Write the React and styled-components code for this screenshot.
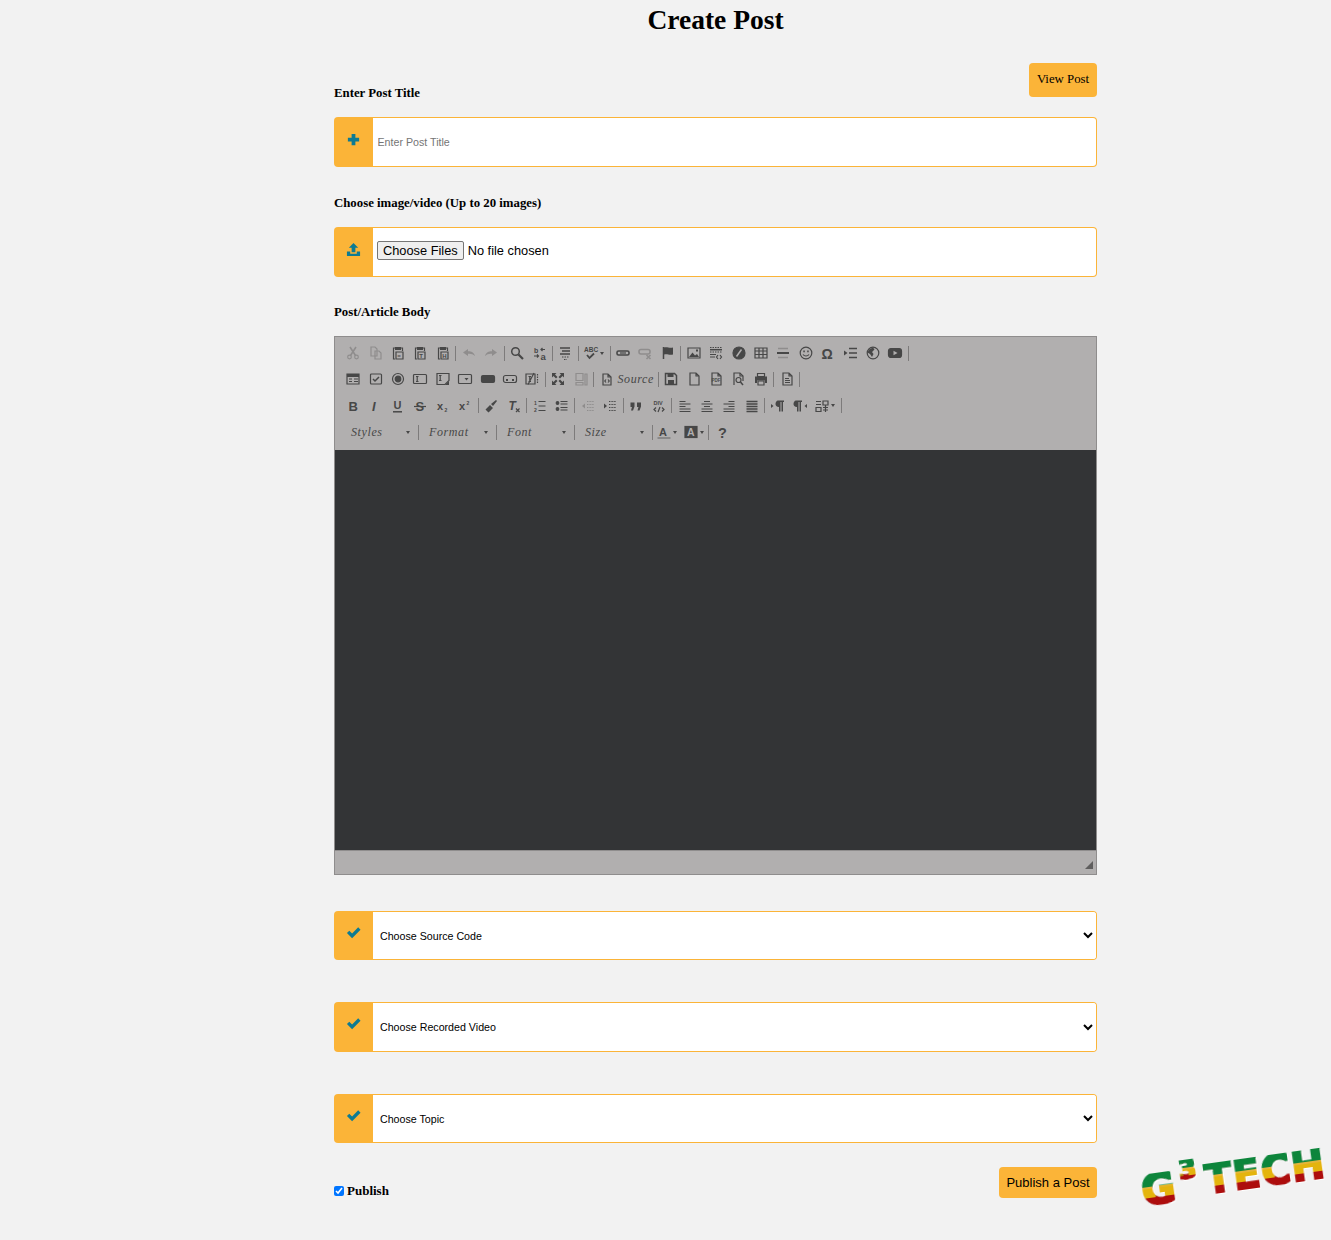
import React from "react";
import styled, { createGlobalStyle } from "styled-components";

const Global = createGlobalStyle`
  html, body { margin: 0; padding: 0; background: #f2f2f2; }
  body { font-family: "Liberation Serif", serif; color: #000; min-height: 1240px; }
`;

const Page = styled.main`
  width: 763px;
  margin-left: 334px;
  display: flex;
  flex-direction: column;
`;
const Title = styled.h1`
  margin: 0;
  height: 40px;
  line-height: 40px;
  text-align: center;
  font-size: 27.5px;
  font-weight: 700;
`;
const TitleRow = styled.div`
  display: flex;
  justify-content: space-between;
  align-items: flex-end;
  margin-top: 23px;
  height: 34px;
`;
const Label = styled.label`
  display: block;
  font-size: 12.8px;
  font-weight: 700;
  line-height: 15px;
`;
const TitleLabel = styled(Label)`
  margin-bottom: -4px;
`;
const SectionLabel = styled(Label)`
  margin-top: 28px;
  padding-top: ${(p) => p.$pt || 0}px;
`;
const ButtonBase = styled.button`
  background: #fbb438;
  border: 0;
  border-radius: 4px;
  color: #000;
  padding: 0;
`;
const ViewButton = styled(ButtonBase)`
  width: 68px;
  height: 34px;
  padding-bottom: 2px;
  font-family: "Liberation Serif", serif;
  font-size: 12.8px;
`;
const PublishButton = styled(ButtonBase)`
  width: 98px;
  height: 31px;
  font-family: "Liberation Sans", sans-serif;
  font-size: 13px;
`;
const Group = styled.div`
  display: flex;
  height: ${(p) => p.$h || 50}px;
  margin-top: ${(p) => p.$top || 0}px;
  border-radius: 4px;
`;
const GroupIcon = styled.div`
  flex: 0 0 39px;
  display: flex;
  justify-content: center;
  padding: ${(p) => p.$pt || 14}px 1px 0 0;
  box-sizing: border-box;
  background: #fbb438;
  border-radius: 4px 0 0 4px;
  color: #0e7b92;
`;
const GroupBody = styled.div`
  flex: 1;
  min-width: 0;
  display: flex;
  align-items: center;
  background: #fff;
  border: 1px solid #fbb438;
  border-left: 0;
  border-radius: 0 4px 4px 0;
  overflow: hidden;
`;
const TextInput = styled.input`
  flex: 1;
  border: 0;
  outline: 0;
  background: transparent;
  padding: 0 4.500px;
  font-family: "Liberation Sans", sans-serif;
  font-size: 10.67px;
  &::placeholder { color: #757575; }
`;
const FileInput = styled.input`
  margin: 0 0 3px 4px;
  font-family: "Liberation Sans", sans-serif;
  font-size: 12.8px;
  color: #000;
  &::file-selector-button {
    padding: 1px 5px;
    margin-right: 4px;
    border: 1px solid #767676;
    border-radius: 2px;
    background: #efefef;
  }
`;
const Select = styled.select`
  flex: 1;
  height: 100%;
  border: 0;
  outline: 0;
  background: #fff;
  padding-left: 3px;
  font-family: "Liberation Sans", sans-serif;
  font-size: 10.67px;
  color: #000;
`;

/* editor */
const Editor = styled.div`
  margin-top: 16px;
  border: 1px solid #8f8d8d;
  background: #b1afaf;
  color: #474747;
`;
const Toolbar = styled.div`
  height: 113px;
  box-sizing: border-box;
  padding: 3px 0 0 7px;
`;
const ToolRow = styled.div`
  display: flex;
  align-items: center;
  height: 26.3px;
`;
const Tool = styled.span`
  flex: 0 0 ${(p) => p.$w || 22.4}px;
  display: flex;
  align-items: center;
  justify-content: center;
  gap: 2px;
  color: ${(p) => (p.$off ? "#8f8d8d" : "#474747")};
`;
const SourceTool = styled.span`
  flex: 0 0 61px;
  display: flex;
  align-items: center;
  gap: 3px;
  padding-left: 5px;
  box-sizing: border-box;
  color: #474747;
`;
const Sep = styled.span`
  flex: 0 0 1px;
  height: 15px;
  margin: 0 1.3px;
  background: #7d7b7b;
`;
const Combo = styled.span`
  flex: 0 0 74.4px;
  display: flex;
  align-items: center;
  padding: 0 6px 0 9px;
  box-sizing: border-box;
  font-family: "Liberation Serif", serif;
  font-style: italic;
  font-size: 12px;
  letter-spacing: 0.6px;
  color: #474747;
`;
const SourceLabel = styled.span`
  font-family: "Liberation Serif", serif;
  font-style: italic;
  font-size: 12px;
  letter-spacing: 0.6px;
`;
const Caret = styled.i`
  display: block;
  width: 0;
  height: 0;
  border: 2px solid transparent;
  border-top: 3px solid #474747;
  border-bottom: 0;
  margin-left: ${(p) => (p.$auto ? "auto" : "0")};
`;
const Body = styled.div`
  height: 400px;
  background: #333436;
`;
const Status = styled.div`
  height: 24px;
  box-sizing: border-box;
  border-top: 1px solid #8f8d8d;
  display: flex;
  justify-content: flex-end;
  align-items: flex-end;
  padding: 0 3px 5px 0;
`;
const Resizer = styled.i`
  width: 0;
  height: 0;
  border-left: 8px solid transparent;
  border-bottom: 8px solid #5f5e5e;
`;
const Footer = styled.div`
  display: flex;
  justify-content: space-between;
  align-items: flex-start;
  margin-top: 24px;
`;
const PublishLabel = styled.label`
  display: flex;
  align-items: center;
  gap: 3px;
  margin-top: 16px;
  font-size: 13px;
  font-weight: 700;
`;
const Check = styled.input`
  width: 10px;
  height: 10px;
  margin: 0;
`;

/* logo */
const Logo = styled.div`
  position: fixed;
  right: 3px;
  bottom: 58px;
  display: flex;
  align-items: flex-start;
  transform: rotate(-8deg);
  transform-origin: right bottom;
  font-family: "DejaVu Sans", sans-serif;
  font-weight: 700;
  filter: url(#logo-heavy) drop-shadow(1px 1px 0 #fff);
`;
const LogoText = styled.span`
  display: block;
  font-size: ${(p) => p.$s}px;
  line-height: ${(p) => p.$s * 0.76}px;
  margin: ${(p) => p.$m || "0"};
  letter-spacing: 1px;
  color: transparent;
  background: linear-gradient(#0a853a 0 40%, #e4b40a 40% 70%, #ad0a0a 70%);
  -webkit-background-clip: text;
  background-clip: text;
`;
const HiddenDefs = styled.svg`
  position: absolute;
  width: 0;
  height: 0;
`;

/* icons */
const Svg = styled.svg`
  display: block;
  fill: none;
  stroke: currentColor;
  stroke-width: 1.2;
  overflow: visible;
`;
const Tx = styled.text`
  font-family: "Liberation Sans", sans-serif;
  font-weight: 700;
  fill: currentColor;
  stroke: none;
`;
const Solid = styled.path`
  fill: currentColor;
  stroke: none;
`;

const doc = <path d="M3 1h6l3 3v9H3zM9 1v3h3" />;
const clip = (l) => (
  <>
    <path d="M4 2H2.500v11H4M10 2h1.500v3" />
    <Solid d="M4 1h6v3H4z" />
    <path d="M5 6h7v7H5z" />
    <Tx x="6.300" y="12" fontSize="6">{l}</Tx>
  </>
);

const ICONS = {
  cut: <><circle cx="3.500" cy="11" r="1.800" /><circle cx="10.500" cy="11" r="1.800" /><path strokeWidth="1.600" d="M4.500 9.500 10 1M9.500 9.500 4 1" /></>,
  copy: <><path d="M2 1h4l2 2v7H2z" /><path d="M6 5h4l2 2v6H6z" /></>,
  paste: clip("="),
  pastet: clip("T"),
  pastew: clip("H"),
  undo: <Solid d="M1 6.500 6 3v2.300c3.500 0 6 1.200 7 4.700-2-2-4-2.600-7-2.300V10z" />,
  redo: <Solid d="M13 6.500 8 3v2.300c-3.500 0-6 1.200-7 4.700 2-2 4-2.600 7-2.300V10z" />,
  find: <><circle cx="5.500" cy="5.500" r="3.800" strokeWidth="1.500" /><path strokeWidth="2.200" d="M8.500 8.500 13 13" /></>,
  replace: <><Tx x="1" y="6.500" fontSize="7">b</Tx><Tx x="7.500" y="13.500" fontSize="9.500">a</Tx><path d="M8 3.500h4M9.500 2 8 3.500 9.500 5M1 10h4.500M4 8.500 5.500 10 4 11.500" /></>,
  selectall: <><path strokeWidth="1.500" d="M2 2h10M4 5h8M2 8h10" /><path strokeDasharray="1.500 1" d="M4 11h7M6 13.500h3" /></>,
  spell: <><Tx x="0" y="6" fontSize="6.500">ABC</Tx><path strokeWidth="1.800" d="M3 9l2.500 3L10 7.500" /></>,
  link: <><rect x="1" y="5" width="12" height="4" rx="1.500" strokeWidth="1.600" /><path d="M4 7h6" /></>,
  unlink: <><rect x="1" y="3.500" width="11" height="4.500" rx="2" strokeWidth="1.600" /><path strokeWidth="1.600" d="M8.500 9l4 4M12.500 9l-4 4" /></>,
  anchor: <><path strokeWidth="1.500" d="M2.500 1v12" /><Solid d="M3 1.500c3-1 5 .8 9 0v7c-4 .8-6-1-9 0z" /></>,
  image: <><path d="M1 2h12v10H1z" /><Solid d="M2 11l3.500-4.500 2.500 3 2-1.500 2 3zM9 3.500h2v2H9z" /></>,
  flash: <><path strokeDasharray="1.500 1" d="M1 1.500h12M1 6h12" /><path strokeWidth="1.500" d="M1 3.700h12" /><path d="M1 8.500h6M1 11h5M9 9l-1.500 2L9 13M11 9l1.500 2-1.500 2" /></>,
  compass: <><circle cx="7" cy="7" r="6" fill="currentColor" /><path stroke="#b1afaf" strokeWidth="1.500" d="M4.500 10.500 9.500 3.500" /></>,
  table: <path d="M1 2h12v10H1zM1 5h12M1 8.500h12M5 2v10M9 2v10" />,
  hr: <><path strokeWidth="2" stroke="#474747" d="M1 7h12" /><path stroke="#8f8d8d" strokeWidth="1.500" d="M2 2.500h10M2 11.500h10" /></>,
  smiley: <><circle cx="7" cy="7" r="5.800" /><Solid d="M4.300 4.500h1.500v1.700H4.300zM8.200 4.500h1.500v1.700H8.200z" /><path d="M4 8.500c1.500 2 4.500 2 6 0" /></>,
  omega: <Tx x="0.500" y="12.500" fontSize="14">Ω</Tx>,
  pagebreak: <><Solid d="M0 4.500 3.500 7 0 9.500z" /><path strokeWidth="1.500" d="M5 2.500h8M5 7h8M5 11.500h8" /></>,
  globe: <><circle cx="7" cy="7" r="5.800" /><Solid d="M3 3.500 7 1.500l1.500 2L6 6 7.500 8 6 11 4 8 1.500 6.500z" /></>,
  youtube: <><rect x="0.500" y="2.500" width="13" height="9" rx="2.500" fill="currentColor" /><path fill="#b1afaf" stroke="none" d="M5.500 4.800 9.500 7l-4 2.200z" /></>,
  form: <><path d="M1 2h12v10H1z" /><Solid d="M1 2h12v3H1zM3 6.500h3v1H3zM8 6.500h4v1H8zM3 9h3v1H3zM8 9h4v1H8z" /></>,
  checkbox: <><rect x="1.500" y="2" width="11" height="10" rx="1" /><path strokeWidth="1.500" d="M4 7l2 2 4-4" /></>,
  radio: <><circle cx="7" cy="7" r="5.500" /><circle cx="7" cy="7" r="2.800" fill="currentColor" /></>,
  textfield: <><rect x="0.500" y="2.500" width="13" height="9" rx="1" /><path d="M3 4.500h2.500M3 9.500h2.500M4.200 4.500v5" /></>,
  textarea: <><path d="M1 1.500h12v7l-4 4H1z" /><path d="M3 3.500h2.500M3 8.500h2.500M4.200 3.500v5" /><Solid d="M13 9v4H9z" /></>,
  select: <><rect x="0.500" y="2.500" width="13" height="9" rx="1" /><Solid d="M6.500 6h4l-2 2.500z" /></>,
  button: <rect x="0.500" y="3.500" width="13" height="7" rx="1.500" fill="currentColor" />,
  imgbutton: <><rect x="0.500" y="3.500" width="13" height="7" rx="2" /><Solid d="M3 7h2v2H3zM9 7h2v2H9z" /></>,
  hidden: <><path d="M1 2h9v10H1z" /><path strokeDasharray="1.500 1" d="M12.500 2v10" /><path d="M3.500 4.500h2.500M3.500 9.500h2.500M4.800 4.500v5M3 12.500 9 1" /></>,
  maximize: <><Solid d="M1 1h4.500L4 2.500 6.500 5 5 6.500 2.500 4 1 5.500zM13 1v4.500L11.500 4 9 6.500 7.500 5 10 2.500 8.500 1zM1 13V8.500L2.500 10 5 7.500 6.500 9 4 11.500 5.500 13zM13 13H8.500L10 11.500 7.500 9 9 7.500 11.500 10 13 8.500z" /></>,
  blocks: <><path d="M2 1.500h7v7H2zM2 10.500h7v2.500H2zM11 2h2v11h-2z" /></>,
  source: <><path d="M3 2h5l3 3v8H3zM8 2v3h3" /><path d="M6 7.500 4.800 9 6 10.500M8 7.500 9.200 9 8 10.500" /></>,
  save: <><path d="M1.500 1.500h9l2 2v9h-11z" strokeWidth="1.500" /><Solid d="M3.500 1.500h6v3.500h-6zM4 8h6v4.500H4z" /></>,
  newpage: doc,
  pdf: <>{doc}<Tx x="2.500" y="10" fontSize="4.500">PDF</Tx></>,
  preview: <><path d="M3 13V1h6l3 3v5" /><path d="M9 1v3h3" /><circle cx="7.500" cy="8" r="2.500" /><path strokeWidth="1.500" d="M9.500 10l2.500 3" /></>,
  print: <><path d="M3.500 1.500h7v3h-7z" /><Solid d="M1 4.500h12v6.500h-2V8.500H3V11H1z" /><path d="M4 9h6v4H4z" /></>,
  templates: <>{doc}<path d="M5 6.500h4M5 8.500h5M5 10.500h5" /></>,
  bold: <Tx x="2.500" y="12" fontSize="13">B</Tx>,
  italic: <Tx x="3" y="12" fontSize="13" fontStyle="italic">I</Tx>,
  underline: <><Tx x="2.500" y="10" fontSize="11">U</Tx><path strokeWidth="1.500" d="M2 12.800h9" /></>,
  strike: <><Tx x="2.500" y="12" fontSize="13">S</Tx><path strokeWidth="1.200" d="M1 7.500h12" /></>,
  sub: <><Tx x="1" y="10.500" fontSize="11">x</Tx><Tx x="8.500" y="13" fontSize="5">2</Tx></>,
  sup: <><Tx x="1" y="11" fontSize="11">x</Tx><Tx x="8.500" y="5.500" fontSize="5">2</Tx></>,
  brush: <><Solid d="M1.500 10.500 6 6l3 3-4.500 4.500zM7 5l5-4 1 1-4 5z" /></>,
  remove: <><Tx x="1.500" y="11" fontSize="12" fontStyle="italic">T</Tx><path d="M9 9.500l3.500 3.500M12.500 9.500 9 13" /></>,
  ol: <><Tx x="1" y="6" fontSize="5">1</Tx><Tx x="1" y="12.500" fontSize="5">2</Tx><path d="M5.500 2.500h7M5.500 7h7M5.500 11.500h7" /></>,
  ul: <><circle cx="2.500" cy="4" r="1.300" fill="currentColor" /><circle cx="2.500" cy="10" r="1.300" fill="currentColor" /><path d="M5.500 2.500h7M5.500 5h7M5.500 8.500h7M5.500 11h7" /></>,
  outdent: <><path strokeDasharray="1 .6" d="M6 2.500h7M6 5.500h7M6 8.500h7M6 11.500h7" /><Solid d="M1 7l3-2.500v5z" /></>,
  indent: <><path strokeDasharray="1 .6" d="M6 2.500h7M6 5.500h7M6 8.500h7M6 11.500h7" /><Solid d="M4 7 1 4.500v5z" /></>,
  quote: <Solid d="M1.500 3.500h4v4L4 11.500H2L3 8H1.500zM8 3.500h4v4l-1.500 4h-2l1-3.500H8z" />,
  div: <><Tx x="1.500" y="6" fontSize="5.500">DIV</Tx><path d="M4 8.500 2 10.500 4 12.500M10 8.500l2 2-2 2M8 8 6 13" /></>,
  left: <path d="M1.500 2.500h6M1.500 5h11M1.500 7.500h6M1.500 10h11M1.500 12.500h11" />,
  center: <path d="M4 2.500h6M1.500 5h11M4 7.500h6M1.500 10h11M1.500 12.500h11" />,
  right: <path d="M6.500 2.500h6M1.500 5h11M6.500 7.500h6M1.500 10h11M1.500 12.500h11" />,
  justify: <path strokeWidth="1.400" d="M1.500 2.500h11M1.500 5h11M1.500 7.500h11M1.500 10h11M1.500 12.500h11" />,
  ltr: <Solid d="M0 5l2.500 2L0 9zM7 1.500h6V3h-1v9.500h-1.500V3H9.500v9.500H8V8C5.500 8 4.500 6.500 4.500 5S5.500 1.500 7 1.500z" />,
  rtl: <Solid d="M14 5l-2.500 2 2.500 2zM3 1.500h6V3H8v9.500H6.500V3H5.500v9.500H4V8C1.500 8 .5 6.500 .5 5S1.500 1.500 3 1.500z" />,
  language: <path d="M1 2.500h5M1 5.500h5M1 8.500h5v4H1zM8 2h5v4H8zM8 8.500h5M8 11h5M10.500 6v7" />,
  textcolor: <><Tx x="2" y="10.500" fontSize="11">A</Tx><path strokeWidth="1.500" stroke="#7d7b7b" d="M0.500 13h13" /></>,
  bgcolor: <><rect x="1" y="1.500" width="12" height="11" fill="currentColor" /><text x="3" y="11" fontSize="10.500" fontWeight="700" fontFamily="Liberation Sans" fill="#b1afaf" stroke="none">A</text></>,
  help: <Tx x="3" y="12.500" fontSize="14.500">?</Tx>,
};

const Icon = ({ name }) => (
  <Svg width="14" height="14" viewBox="0 0 14 14" aria-hidden="true">{ICONS[name]}</Svg>
);

const ROWS = [
  ["cut!", "copy!", "paste", "pastet", "pastew", "|", "undo!", "redo!", "|", "find", "replace", "|", "selectall", "|", "spell+", "|", "link", "unlink!", "anchor", "|", "image", "flash", "compass", "table", "hr", "smiley", "omega", "pagebreak", "globe", "youtube", "|"],
  ["form", "checkbox", "radio", "textfield", "textarea", "select", "button", "imgbutton", "hidden", "|", "maximize", "blocks!", "|", "source*", "|", "save", "newpage", "pdf", "preview", "print", "|", "templates", "|"],
  ["bold", "italic", "underline", "strike", "sub", "sup", "|", "brush", "remove", "|", "ol", "ul", "|", "outdent!", "indent", "|", "quote", "div", "|", "left", "center", "right", "justify", "|", "ltr", "rtl", "language+", "|"],
];

const renderToken = (t, i) => {
  if (t === "|") return <Sep key={i} />;
  const name = t.replace(/[!+*]$/, "");
  if (t.endsWith("*"))
    return (
      <SourceTool key={i}>
        <Icon name={name} />
        <SourceLabel>Source</SourceLabel>
      </SourceTool>
    );
  if (t.endsWith("+"))
    return (
      <Tool key={i} $w={28}>
        <Icon name={name} />
        <Caret />
      </Tool>
    );
  return (
    <Tool key={i} $off={t.endsWith("!")}>
      <Icon name={name} />
    </Tool>
  );
};

const IconFrame = ({ children, size = 15 }) => (
  <Svg width={size} height={size} viewBox="0 0 16 16" aria-hidden="true">{children}</Svg>
);
const PlusIcon = () => (
  <IconFrame>
    <Solid d="M6 2h4v4h4v4h-4v4H6v-4H2V6h4z" />
  </IconFrame>
);
const UploadIcon = () => (
  <IconFrame>
    <Solid d="M8 1l5 5H10v5H6V6H3zM1 10h3.500v2.500h7V10H15v5H1z" />
  </IconFrame>
);
const CheckIcon = () => (
  <IconFrame>
    <Solid d="M1 8.500 3.500 6l3 3L13 2.500 15.500 5l-9 9z" />
  </IconFrame>
);

const Choice = ({ label, top, h = 49 }) => (
  <Group $top={top} $h={h}>
    <GroupIcon $pt={14}><CheckIcon /></GroupIcon>
    <GroupBody>
      <Select defaultValue="">
        <option value="">{label}</option>
      </Select>
    </GroupBody>
  </Group>
);

export default function App() {
  return (
    <>
      <Global />
      <Page>
        <Title>Create Post</Title>
        <TitleRow>
          <TitleLabel>Enter Post Title</TitleLabel>
          <ViewButton type="button">View Post</ViewButton>
        </TitleRow>
        <Group $top={20}>
          <GroupIcon $pt={15}><PlusIcon /></GroupIcon>
          <GroupBody>
            <TextInput placeholder="Enter Post Title" />
          </GroupBody>
        </Group>
        <SectionLabel $pt={1}>Choose image/video (Up to 20 images)</SectionLabel>
        <Group $top={16}>
          <GroupIcon $pt={15}><UploadIcon /></GroupIcon>
          <GroupBody>
            <FileInput type="file" multiple />
          </GroupBody>
        </Group>
        <SectionLabel>Post/Article Body</SectionLabel>
        <Editor>
          <Toolbar>
            {ROWS.map((row, r) => (
              <ToolRow key={r}>{row.map(renderToken)}</ToolRow>
            ))}
            <ToolRow>
              <Combo>Styles<Caret $auto /></Combo>
              <Sep />
              <Combo>Format<Caret $auto /></Combo>
              <Sep />
              <Combo>Font<Caret $auto /></Combo>
              <Sep />
              <Combo>Size<Caret $auto /></Combo>
              <Sep />
              <Tool $w={27}><Icon name="textcolor" /><Caret /></Tool>
              <Tool $w={26}><Icon name="bgcolor" /><Caret /></Tool>
              <Sep />
              <Tool $w={23}><Icon name="help" /></Tool>
            </ToolRow>
          </Toolbar>
          <Body />
          <Status><Resizer /></Status>
        </Editor>
        <Choice label="Choose Source Code" top={36} />
        <Choice label="Choose Recorded Video" top={42} h={50} />
        <Choice label="Choose Topic" top={42} />
        <Footer>
          <PublishLabel>
            <Check type="checkbox" defaultChecked />
            Publish
          </PublishLabel>
          <PublishButton type="button">Publish a Post</PublishButton>
        </Footer>
      </Page>
      <HiddenDefs aria-hidden="true">
        <filter id="logo-heavy">
          <feMorphology operator="dilate" radius="0.9" />
        </filter>
      </HiddenDefs>
      <Logo>
        <LogoText $s={42} $m="2px 4px 0 0">G</LogoText>
        <LogoText $s={26} $m="-7px 6px 0 0">3</LogoText>
        <LogoText $s={40}>TECH</LogoText>
      </Logo>
    </>
  );
}
